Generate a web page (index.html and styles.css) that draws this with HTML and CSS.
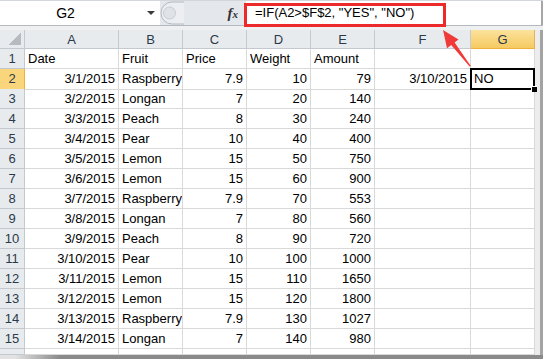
FILE: index.html
```html
<!DOCTYPE html>
<html lang="en">

<head>
    <meta charset="UTF-8">
    <meta name="viewport" content="width=device-width, initial-scale=1.0">
    <title>IF formula</title>
    <link rel="stylesheet" href="styles.css">
</head>

<body>
    <div class="window">
        <!-- Formula bar -->
        <div class="formula-bar">
            <div class="name-box">
                <span class="name">G2</span>
                <span class="drop"></span>
            </div>
            <div class="grip">
                <svg width="26" height="24" viewBox="0 0 26 24">
                    <path d="M24 1 H12 A11 11 0 0 0 12 23 H24" fill="#eceef1" stroke="#b4b9bf" />
                    <circle cx="9.5" cy="12" r="6" fill="#dfe2e6" stroke="#c9cdd2" />
                </svg>
                <span class="fx">f<span>x</span></span>
            </div>
            <div class="formula">=IF(A2&gt;$F$2, "YES", "NO")</div>
        </div>
        <div class="gap"></div>

        <!-- Sheet -->
        <div class="sheet">
            <div class="row head">
                <div class="corner"></div>
                <div class="col">A</div>
                <div class="col">B</div>
                <div class="col">C</div>
                <div class="col">D</div>
                <div class="col">E</div>
                <div class="col">F</div>
                <div class="col sel">G</div>
                <div class="edge"></div>
            </div>
            <div class="row">
                <div class="rh">1</div>
                <div class="c">Date</div><div class="c">Fruit</div><div class="c">Price</div><div class="c">Weight</div><div class="c">Amount</div><div class="c"></div><div class="c"></div>
                <div class="edge"></div>
            </div>
            <div class="row">
                <div class="rh sel">2</div>
                <div class="c n">3/1/2015</div><div class="c">Raspberry</div><div class="c n">7.9</div><div class="c n">10</div><div class="c n">79</div><div class="c n">3/10/2015</div><div class="c active">NO</div>
                <div class="edge"></div>
            </div>
            <div class="row">
                <div class="rh">3</div>
                <div class="c n">3/2/2015</div><div class="c">Longan</div><div class="c n">7</div><div class="c n">20</div><div class="c n">140</div><div class="c"></div><div class="c"></div>
                <div class="edge"></div>
            </div>
            <div class="row">
                <div class="rh">4</div>
                <div class="c n">3/3/2015</div><div class="c">Peach</div><div class="c n">8</div><div class="c n">30</div><div class="c n">240</div><div class="c"></div><div class="c"></div>
                <div class="edge"></div>
            </div>
            <div class="row">
                <div class="rh">5</div>
                <div class="c n">3/4/2015</div><div class="c">Pear</div><div class="c n">10</div><div class="c n">40</div><div class="c n">400</div><div class="c"></div><div class="c"></div>
                <div class="edge"></div>
            </div>
            <div class="row">
                <div class="rh">6</div>
                <div class="c n">3/5/2015</div><div class="c">Lemon</div><div class="c n">15</div><div class="c n">50</div><div class="c n">750</div><div class="c"></div><div class="c"></div>
                <div class="edge"></div>
            </div>
            <div class="row">
                <div class="rh">7</div>
                <div class="c n">3/6/2015</div><div class="c">Lemon</div><div class="c n">15</div><div class="c n">60</div><div class="c n">900</div><div class="c"></div><div class="c"></div>
                <div class="edge"></div>
            </div>
            <div class="row">
                <div class="rh">8</div>
                <div class="c n">3/7/2015</div><div class="c">Raspberry</div><div class="c n">7.9</div><div class="c n">70</div><div class="c n">553</div><div class="c"></div><div class="c"></div>
                <div class="edge"></div>
            </div>
            <div class="row">
                <div class="rh">9</div>
                <div class="c n">3/8/2015</div><div class="c">Longan</div><div class="c n">7</div><div class="c n">80</div><div class="c n">560</div><div class="c"></div><div class="c"></div>
                <div class="edge"></div>
            </div>
            <div class="row">
                <div class="rh">10</div>
                <div class="c n">3/9/2015</div><div class="c">Peach</div><div class="c n">8</div><div class="c n">90</div><div class="c n">720</div><div class="c"></div><div class="c"></div>
                <div class="edge"></div>
            </div>
            <div class="row">
                <div class="rh">11</div>
                <div class="c n">3/10/2015</div><div class="c">Pear</div><div class="c n">10</div><div class="c n">100</div><div class="c n">1000</div><div class="c"></div><div class="c"></div>
                <div class="edge"></div>
            </div>
            <div class="row">
                <div class="rh">12</div>
                <div class="c n">3/11/2015</div><div class="c">Lemon</div><div class="c n">15</div><div class="c n">110</div><div class="c n">1650</div><div class="c"></div><div class="c"></div>
                <div class="edge"></div>
            </div>
            <div class="row">
                <div class="rh">13</div>
                <div class="c n">3/12/2015</div><div class="c">Lemon</div><div class="c n">15</div><div class="c n">120</div><div class="c n">1800</div><div class="c"></div><div class="c"></div>
                <div class="edge"></div>
            </div>
            <div class="row">
                <div class="rh">14</div>
                <div class="c n">3/13/2015</div><div class="c">Raspberry</div><div class="c n">7.9</div><div class="c n">130</div><div class="c n">1027</div><div class="c"></div><div class="c"></div>
                <div class="edge"></div>
            </div>
            <div class="row">
                <div class="rh">15</div>
                <div class="c n">3/14/2015</div><div class="c">Longan</div><div class="c n">7</div><div class="c n">140</div><div class="c n">980</div><div class="c"></div><div class="c"></div>
                <div class="edge"></div>
            </div>
            <div class="row part">
                <div class="rh"></div>
                <div class="c"></div><div class="c"></div><div class="c"></div><div class="c"></div><div class="c"></div><div class="c"></div><div class="c"></div>
                <div class="edge"></div>
            </div>
        </div>
        <div class="bottom"></div>

        <!-- Annotation -->
        <div class="callout"></div>
        <svg class="arrow" width="543" height="359" viewBox="0 0 543 359">
            <polygon points="443,30 458.5,39.5 454.6,42.6 470.8,66 469.6,66.4 451.2,45 447,48.2" fill="#f03a3a" />
        </svg>
    </div>
</body>

</html>
```

FILE: styles.css
```css
body {
    margin: 0;
    font-family: "Liberation Sans", Arial, sans-serif;
    font-size: 13px;
    color: #000;
    background: #fff;
}

.window {
    position: relative;
    width: 543px;
    height: 359px;
    overflow: hidden;
}

/* formula bar */
.formula-bar {
    display: flex;
    height: 26px;
    box-sizing: border-box;
    border-top: 1px solid #d3d6da;
    border-bottom: 1px solid #b4b9bf;
    background: #e4e7eb;
}

.name-box {
    width: 160px;
    background: #fff;
    display: flex;
    align-items: center;
}

.name {
    flex: 1;
    text-align: center;
    font-size: 14px;
    padding-right: 16px;
}

.drop {
    width: 0;
    height: 0;
    border-left: 4px solid transparent;
    border-right: 4px solid transparent;
    border-top: 4px solid #3c3c3c;
    margin-right: 5px;
}

.grip {
    width: 86px;
    display: flex;
    align-items: center;
    justify-content: space-between;
    padding-right: 8px;
    box-sizing: border-box;
}

.fx {
    font-family: "Liberation Serif", serif;
    font-style: italic;
    font-weight: bold;
    font-size: 15px;
    color: #333;
}

.fx span {
    font-size: 11px;
}

.formula {
    flex: 1;
    background: #fff;
    padding-left: 9px;
    line-height: 24px;
    font-size: 13px;
    border-right: 2px solid #a7a7a7;
}

.gap {
    height: 4px;
    background: #eef0f2;
}

/* grid */
.row {
    display: grid;
    grid-template-columns: 25px 94px 64px 64px 64px 64px 96px 64px 1fr;
    height: 20px;
}

.row.head {
    height: 19px;
}

.row.part {
    height: 6px;
}

.row > div {
    box-sizing: border-box;
    white-space: nowrap;
    overflow: hidden;
}

.corner,
.col,
.rh {
    background: #e8ebee;
    color: #2b3a4a;
    border-right: 1px solid #c3c9cf;
    border-bottom: 1px solid #c3c9cf;
    text-align: center;
    font-size: 13px;
}

.corner {
    position: relative;
}

.corner::after {
    content: "";
    position: absolute;
    right: 3px;
    bottom: 3px;
    width: 12px;
    height: 12px;
    background: linear-gradient(135deg, transparent 50%, #b6bbc0 50%);
}

.col {
    line-height: 19px;
}

.col.sel {
    background: linear-gradient(#fbe29c, #f6ca62);
    border-bottom-color: #f0b13c;
    border-right-color: #e0b45a;
}

.rh {
    line-height: 20px;
}

.rh.sel {
    background: #f9d67c;
    border-right-color: #f0b13c;
}

.c {
    border-right: 1px solid #d9d9d9;
    border-bottom: 1px solid #d9d9d9;
    padding: 0 3px;
    line-height: 20px;
}

.n {
    text-align: right;
}

.active {
    position: relative;
    overflow: visible !important;
}

.active::after {
    content: "";
    position: absolute;
    left: -1px;
    top: -1px;
    right: -1px;
    bottom: -1px;
    border: 2px solid #000;
}

.active::before {
    content: "";
    position: absolute;
    right: -3px;
    bottom: -3px;
    width: 5px;
    height: 5px;
    background: #000;
    border-left: 1px solid #fff;
    border-top: 1px solid #fff;
    z-index: 1;
}

.edge {
    background: linear-gradient(to right, #ececec 5px, #a3a3a3 5px);
}

.bottom {
    height: 4px;
    background: linear-gradient(to right, #e2e2e2 15px, #8a8a8a 60px);
}

/* annotation */
.callout {
    position: absolute;
    left: 244px;
    top: 3px;
    width: 202px;
    height: 24px;
    box-sizing: border-box;
    border: 3px solid #ec2a2a;
}

.arrow {
    position: absolute;
    left: 0;
    top: 0;
    pointer-events: none;
}
```
